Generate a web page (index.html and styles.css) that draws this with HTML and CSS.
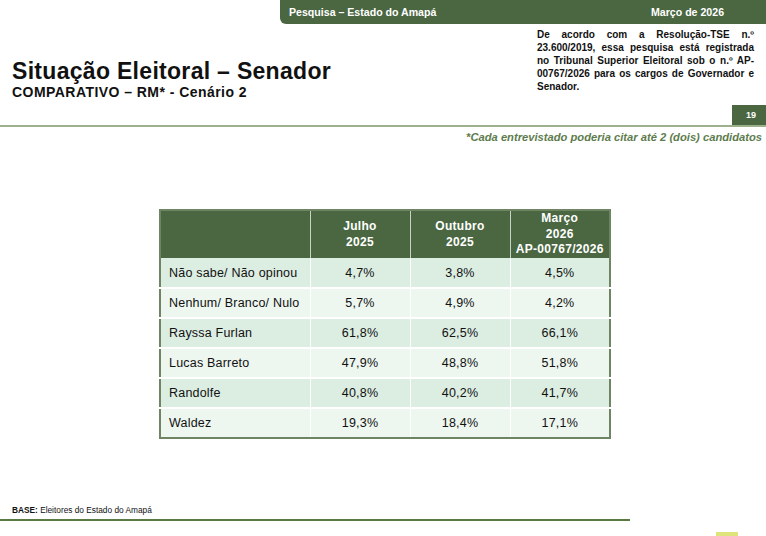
FILE: index.html
```html
<!DOCTYPE html>
<html lang="pt-BR">
<head>
<meta charset="utf-8">
<title>Situação Eleitoral – Senador</title>
<link rel="stylesheet" href="styles.css">
</head>
<body>
<div class="page">
  <header class="hdr-bar">
    <span class="hdr-left">Pesquisa – Estado do Amapá</span>
    <span class="hdr-right">Março de 2026</span>
  </header>
  <div class="head-row">
    <div class="titles">
      <h1 class="title">Situação Eleitoral – Senador</h1>
      <h2 class="subtitle">COMPARATIVO – RM* - Cenário 2</h2>
    </div>
    <p class="notice">De acordo com a Resolução-TSE n.º 23.600/2019, essa pesquisa está registrada no Tribunal Superior Eleitoral sob o n.º AP-00767/2026 para os cargos de Governador e Senador.</p>
  </div>
  <div class="rule-row">
    <span class="page-num">19</span>
  </div>
  <p class="note">*Cada entrevistado poderia citar até 2 (dois) candidatos</p>
  <main class="table-wrap">
    <table class="data">
      <thead>
        <tr>
          <th class="c-name"></th>
          <th class="c-val">Julho<br>2025</th>
          <th class="c-val">Outubro<br>2025</th>
          <th class="c-val">Março<br>2026<br>AP-00767/2026</th>
        </tr>
      </thead>
      <tbody>
        <tr class="odd"><td class="name">Não sabe/ Não opinou</td><td>4,7%</td><td>3,8%</td><td>4,5%</td></tr>
        <tr class="even"><td class="name">Nenhum/ Branco/ Nulo</td><td>5,7%</td><td>4,9%</td><td>4,2%</td></tr>
        <tr class="odd"><td class="name">Rayssa Furlan</td><td>61,8%</td><td>62,5%</td><td>66,1%</td></tr>
        <tr class="even"><td class="name">Lucas Barreto</td><td>47,9%</td><td>48,8%</td><td>51,8%</td></tr>
        <tr class="odd"><td class="name">Randolfe</td><td>40,8%</td><td>40,2%</td><td>41,7%</td></tr>
        <tr class="even"><td class="name">Waldez</td><td>19,3%</td><td>18,4%</td><td>17,1%</td></tr>
      </tbody>
    </table>
  </main>
  <footer class="footer">
    <p class="base"><b>BASE:</b> Eleitores do Estado do Amapá</p>
    <div class="foot-line"></div>
    <div class="foot-mark-row"><span class="foot-mark"></span></div>
  </footer>
</div>
</body>
</html>
```
FILE: styles.css
```css
* { box-sizing: border-box; }
html, body { margin: 0; padding: 0; background: #fff; }
body {
  font-family: "Liberation Sans", Arial, sans-serif;
  color: #111;
}
.page {
  width: 766px;
  height: 536px;
  overflow: hidden;
  display: flex;
  flex-direction: column;
}
.hdr-bar {
  margin-left: 280px;
  height: 24px;
  background: #4a6741;
  border-bottom-left-radius: 6px;
  color: #fff;
  font-weight: bold;
  font-size: 10.6px;
  display: flex;
  align-items: center;
  padding-left: 9px;
}
.hdr-left { flex: 1; }
.hdr-right { width: 115px; }
.head-row {
  display: flex;
  justify-content: space-between;
  align-items: flex-start;
}
.titles { padding: 34px 0 0 12px; }
.title {
  margin: 0;
  font-size: 23px;
  line-height: 26px;
  letter-spacing: 0.3px;
  font-weight: bold;
  color: #111;
}
.subtitle {
  margin: 0;
  font-size: 14px;
  line-height: 16px;
  letter-spacing: 0.45px;
  font-weight: bold;
  color: #111;
}
.notice {
  margin: 4px 12px 0 0;
  width: 217px;
  font-size: 10px;
  line-height: 13px;
  font-weight: bold;
  text-align: justify;
  color: #111;
}
.rule-row {
  margin-top: 5px;
  height: 22px;
  border-bottom: 2px solid #9bb08b;
  display: flex;
  justify-content: flex-end;
}
.page-num {
  width: 34px;
  height: 20px;
  background: #4a6741;
  color: #fff;
  font-size: 9px;
  font-weight: bold;
  display: flex;
  align-items: center;
  justify-content: center;
  padding-left: 4px;
}
.note {
  margin: 3px 4px 0 0;
  text-align: right;
  font-size: 11.2px;
  line-height: 14px;
  font-weight: bold;
  font-style: italic;
  color: #5d7c4d;
}
.table-wrap {
  padding: 65px 0 0 159px;
}
.data {
  border-collapse: collapse;
  border: 2px solid #6e8462;
  font-size: 12.5px;
  letter-spacing: 0.2px;
}
.data th {
  background: #4a6741;
  color: #fff;
  font-weight: bold;
  font-size: 12px;
  line-height: 15.5px;
  letter-spacing: 0.3px;
  height: 48px;
  padding: 0;
  text-align: center;
  border-left: 1px solid #c9d3c5;
}
.data th:first-child { border-left: none; }
.c-name { width: 150px; }
.c-val { width: 100px; }
.data td {
  height: 30px;
  padding: 0;
  text-align: center;
  border-left: 1px solid #fff;
  border-top: 2px solid #fff;
  color: #111;
}
.data td.name {
  text-align: left;
  padding-left: 8px;
  border-left: none;
}
.data tbody tr:first-child td { border-top: none; }
.odd td { background: #dcede2; }
.even td { background: #edf6ef; }
.footer { margin-top: auto; }
.base {
  margin: 0 0 4px 12px;
  font-size: 8.3px;
  line-height: 10px;
  color: #111;
}
.foot-line {
  width: 630px;
  height: 2px;
  background: #5a7a44;
}
.foot-mark-row {
  height: 15px;
  display: flex;
  align-items: flex-end;
  padding-left: 716px;
}
.foot-mark {
  width: 22px;
  height: 4px;
  background: #dfe47a;
}
```
